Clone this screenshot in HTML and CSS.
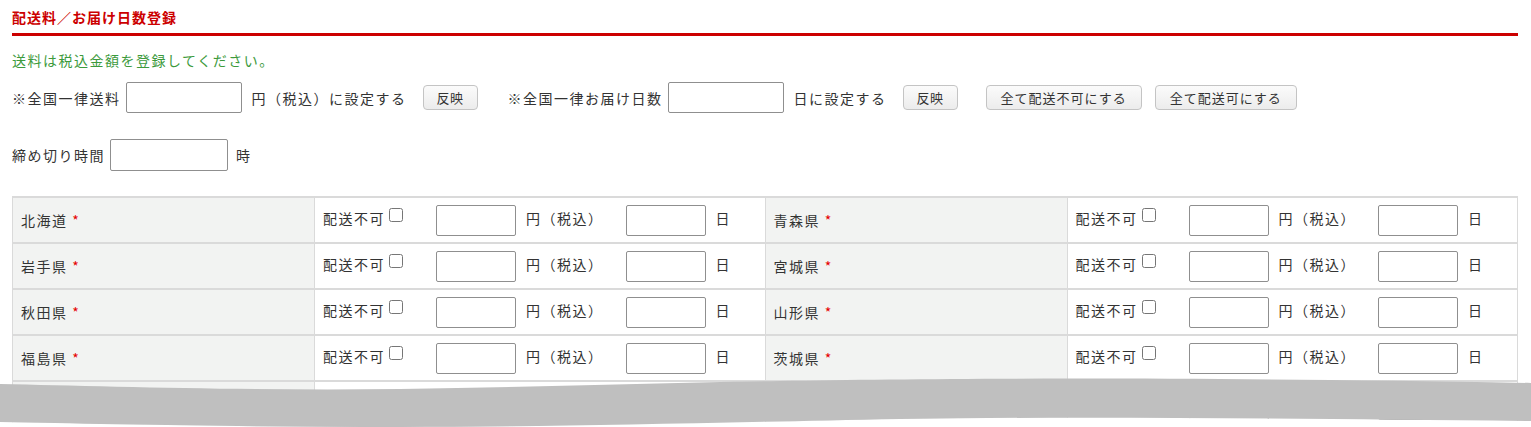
FILE: index.html
```html
<!DOCTYPE html>
<html lang="ja">
<head>
    <meta charset="UTF-8">
    <meta name="viewport" content="width=device-width, initial-scale=1.0">
    <title>配送料／お届け日数登録</title>

    <link rel="stylesheet" href="styles.css">

    <script type="text/javascript">
        const prefs = ["北海道", "青森県", "岩手県", "宮城県", "秋田県", "山形県", "福島県", "茨城県", "栃木県", "群馬県"];

        const makeCells = (name) => {
            return `<td class="pref-name">${name} <span class="req">*</span></td>` +
                `<td class="pref-input">` +
                `<span class="ng">配送不可</span><input type="checkbox" class="ng-check">` +
                `<input type="text" class="num-box yen-box"><span class="unit">円（税込）</span>` +
                `<input type="text" class="num-box day-box"><span class="unit">日</span>` +
                `</td>`;
        };

        const buildTable = () => {
            const tbody = document.getElementById("prefRows");
            for(let i = 0; i < prefs.length; i += 2){
                const tr = document.createElement("tr");
                tr.innerHTML = makeCells(prefs[i]) + makeCells(prefs[i + 1]);
                tbody.appendChild(tr);
            }
        };
    </script>
</head>
<body onload="buildTable()">
    <div class="page">
        <div class="wrap">
            <h2 class="title">配送料／お届け日数登録</h2>
            <p class="note">送料は税込金額を登録してください。</p>

            <div class="bulk-row">
                <span class="label">※全国一律送料</span>
                <input type="text" class="wide-box">
                <span class="after">円（税込）に設定する</span>
                <button type="button" class="btn">反映</button>

                <span class="label group-2">※全国一律お届け日数</span>
                <input type="text" class="wide-box">
                <span class="after">日に設定する</span>
                <button type="button" class="btn">反映</button>

                <button type="button" class="btn btn-all first-all">全て配送不可にする</button>
                <button type="button" class="btn btn-all">全て配送可にする</button>
            </div>

            <div class="deadline-row">
                <span class="label">締め切り時間</span>
                <input type="text" class="wide-box">
                <span class="after">時</span>
            </div>

            <table class="pref-table">
                <tbody id="prefRows"></tbody>
            </table>
        </div>

        <!-- torn edge, the page is cut off here -->
        <svg class="tear" width="1531" height="50" viewBox="0 0 1531 50">
            <path d="M1531,44 C1300,42 1100,39 900,42 C700,46 550,50 400,50 C250,50 100,47 0,45 L0,50 L1531,50 Z" fill="#fff"/>
            <path d="M0,7 C100,9 250,14 400,12 C550,10 650,6 780,4 C950,1 1200,0 1531,6 L1531,44 C1300,42 1100,39 900,42 C700,46 550,50 400,50 C250,50 100,47 0,45 Z" fill="#bfbfbf"/>
        </svg>
    </div>
</body>
</html>
```

FILE: styles.css
```css
body {
    margin: 0;
    overflow: hidden;
    font-family: "Noto Sans CJK JP", "Noto Sans", sans-serif;
    font-size: 14px;
    letter-spacing: 1.5px;
    color: #333;
    background: #fff;
}

.page {
    position: relative;
    height: 427px;
    overflow: hidden;
}

.wrap {
    padding: 0 13px 0 12px;
}

.title {
    margin: 0;
    padding: 8px 0 7px;
    font-size: 14px;
    line-height: 18px;
    font-weight: bold;
    letter-spacing: 1px;
    color: #cc0000;
    border-bottom: 3px solid #cc0000;
}

.note {
    margin: 14px 0 0;
    line-height: 20px;
    color: #3c9a3c;
}

.bulk-row,
.deadline-row {
    display: flex;
    align-items: center;
    white-space: nowrap;
}

.bulk-row {
    margin-top: 12px;
    height: 31px;
}

.deadline-row {
    margin-top: 26px;
    height: 32px;
}

.wide-box {
    box-sizing: border-box;
    width: 116px;
    height: 31px;
    margin-left: 5px;
    border: 1px solid #8f8f8f;
    border-radius: 2px;
}

.deadline-row .wide-box {
    width: 118px;
    height: 32px;
}

.after {
    margin-left: 10px;
}

.deadline-row .after {
    margin-left: 8px;
}

.group-2 {
    margin-left: 30px;
}

.btn {
    box-sizing: border-box;
    height: 25px;
    margin-left: 16px;
    padding: 0 13px;
    font-family: "Noto Sans CJK JP", sans-serif;
    font-size: 13px;
    letter-spacing: 0.5px;
    color: #333;
    background: linear-gradient(#fbfbfb, #ececec);
    border: 1px solid #c4c4c4;
    border-radius: 4px;
}

.btn-all {
    margin-left: 13px;
    padding: 0 14px;
    letter-spacing: 1px;
}

.first-all {
    margin-left: 28px;
}

.pref-table {
    width: 100%;
    margin-top: 25px;
    border-collapse: collapse;
    table-layout: fixed;
}

.pref-table td {
    height: 44px;
    padding: 0 0 0 8px;
    border: 1px solid #dadada;
    border-top-width: 2px;
    white-space: nowrap;
}

.pref-name {
    width: 293px;
    background: #f2f3f2;
}

.req {
    color: #e60000;
}

.ng-check {
    width: 14px;
    height: 14px;
    margin: 0 0 0 4px;
    vertical-align: 2px;
}

.num-box {
    box-sizing: border-box;
    width: 80px;
    height: 31px;
    border: 1px solid #8f8f8f;
    border-radius: 2px;
    vertical-align: middle;
}

.yen-box {
    margin-left: 33px;
}

.day-box {
    margin-left: 22px;
}

.unit {
    margin-left: 10px;
}

.tear {
    position: absolute;
    left: 0;
    top: 377px;
}
```
